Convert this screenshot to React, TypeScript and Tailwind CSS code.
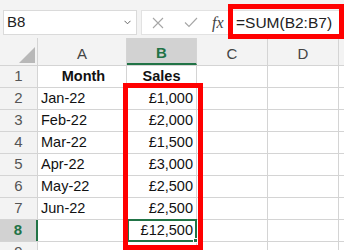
import React from "react";

const font = { fontFamily: "'Liberation Sans', Arial, sans-serif" };

type Row = { n: number; a: string; b: string; bold?: boolean };

const rows: Row[] = [
  { n: 1, a: "Month", b: "Sales", bold: true },
  { n: 2, a: "Jan-22", b: "£1,000" },
  { n: 3, a: "Feb-22", b: "£2,000" },
  { n: 4, a: "Mar-22", b: "£1,500" },
  { n: 5, a: "Apr-22", b: "£3,000" },
  { n: 6, a: "May-22", b: "£2,500" },
  { n: 7, a: "Jun-22", b: "£2,500" },
  { n: 8, a: "", b: "£12,500" },
  { n: 9, a: "", b: "" },
];

function Toolbar() {
  return (
    <div className="h-[38px] bg-[#f3f3f3] flex items-start pt-[10px] pl-[3px]">
      <div className="w-[134px] h-[25px] bg-white border border-[#dadada] flex items-center justify-between pl-[3px] pr-[5px]">
        <span className="text-[15px] text-[#222]">B8</span>
        <svg width="7" height="5" viewBox="0 0 7 5">
          <path d="M0.5 0.8 L3.5 3.8 L6.5 0.8" fill="none" stroke="#666" strokeWidth="1" />
        </svg>
      </div>
      <div className="ml-[4px] w-[88px] h-[25px] bg-white border border-[#e2e2e2] border-r-0 flex items-center">
        <svg width="12" height="12" viewBox="0 0 12 12" className="ml-[10px]">
          <path d="M1 1 L11 11 M11 1 L1 11" stroke="#a6a6a6" strokeWidth="1.1" />
        </svg>
        <svg width="14" height="11" viewBox="0 0 14 11" className="ml-[20px]">
          <path d="M1 5.5 L5 9.5 L13 1" fill="none" stroke="#a6a6a6" strokeWidth="1.1" />
        </svg>
        <span className="ml-[14px] text-[16px] italic text-[#444]" style={{ fontFamily: "'Liberation Serif', serif" }}>
          fx
        </span>
      </div>
      <div className="flex-1 h-[25px] bg-white border-y border-[#e2e2e2] flex items-center pl-[7px]">
        <span className="text-[15.5px] text-[#222]">=SUM(B2:B7)</span>
      </div>
    </div>
  );
}

function HeaderRow() {
  const cols = [
    { l: "A", w: "w-[89px]" },
    { l: "B", w: "w-[70px]", sel: true },
    { l: "C", w: "w-[71px]" },
    { l: "D", w: "w-[71px]" },
  ];
  return (
    <div className="flex h-[28px] bg-[#f3f3f3] border-b border-[#d4d4d4]">
      <div className="w-[38px] shrink-0 border-r border-[#d4d4d4] flex items-end justify-end pr-[2px] pb-[2px]">
        <svg width="16" height="16" viewBox="0 0 16 16">
          <path d="M16 0 L16 16 L0 16 Z" fill="#b8b8b8" />
        </svg>
      </div>
      {cols.map((c) =>
        c.sel ? (
          <div key={c.l} className={`${c.w} shrink-0 border-r border-[#d4d4d4] bg-[#d2d2d2] border-b-2 border-b-[#217346] flex items-center justify-center pt-[5px] text-[15px] font-bold text-[#217346]`}>
            {c.l}
          </div>
        ) : (
          <div key={c.l} className={`${c.w} shrink-0 border-r border-[#d4d4d4] flex items-center justify-center pt-[5px] text-[15px] text-[#444]`}>
            {c.l}
          </div>
        )
      )}
      <div className="flex-1" />
    </div>
  );
}

function DataRow({ r }: { r: Row }) {
  const sel = r.n === 8;
  return (
    <div className="flex h-[22px] border-b border-[#d4d4d4] text-[14.5px] text-[#111]">
      {sel ? (
        <div className="w-[38px] shrink-0 bg-[#d2d2d2] border-r-2 border-r-[#217346] flex items-center justify-center text-[15px] font-bold text-[#217346]">
          {r.n}
        </div>
      ) : (
        <div className="w-[38px] shrink-0 bg-[#f3f3f3] border-r border-[#d4d4d4] flex items-center justify-center text-[15px] text-[#555]">
          {r.n}
        </div>
      )}
      <div className={`w-[89px] shrink-0 border-r border-[#d4d4d4] flex items-center pl-[3px] ${r.bold ? "justify-center font-bold" : ""}`}>
        {r.a}
      </div>
      {sel ? (
        <div className="relative w-[70px] shrink-0 -mt-px h-[23px] border-2 border-[#217346] flex items-center justify-end pr-[2px]">
          {r.b}
          <div className="absolute -right-[3px] -bottom-[3px] w-[5px] h-[5px] bg-[#217346] border border-white" />
        </div>
      ) : (
        <div className={`w-[70px] shrink-0 border-r border-[#d4d4d4] flex items-center ${r.bold ? "justify-center font-bold" : "justify-end pr-[3px]"}`}>
          {r.b}
        </div>
      )}
      <div className="w-[71px] shrink-0 border-r border-[#d4d4d4]" />
      <div className="w-[71px] shrink-0 border-r border-[#d4d4d4]" />
      <div className="flex-1" />
    </div>
  );
}

export default function App() {
  return (
    <div className="relative w-[344px] h-[250px] overflow-hidden bg-white" style={font}>
      <Toolbar />
      <HeaderRow />
      {rows.map((r) => (
        <DataRow key={r.n} r={r} />
      ))}
      {/* red callouts */}
      <div className="absolute left-[228px] top-[4px] w-[116px] h-[35px] border-[5px] border-[#ff0000]" />
      <div className="absolute left-[123px] top-[83px] w-[80px] h-[167px] border-[5px] border-[#ff0000]" />
    </div>
  );
}
